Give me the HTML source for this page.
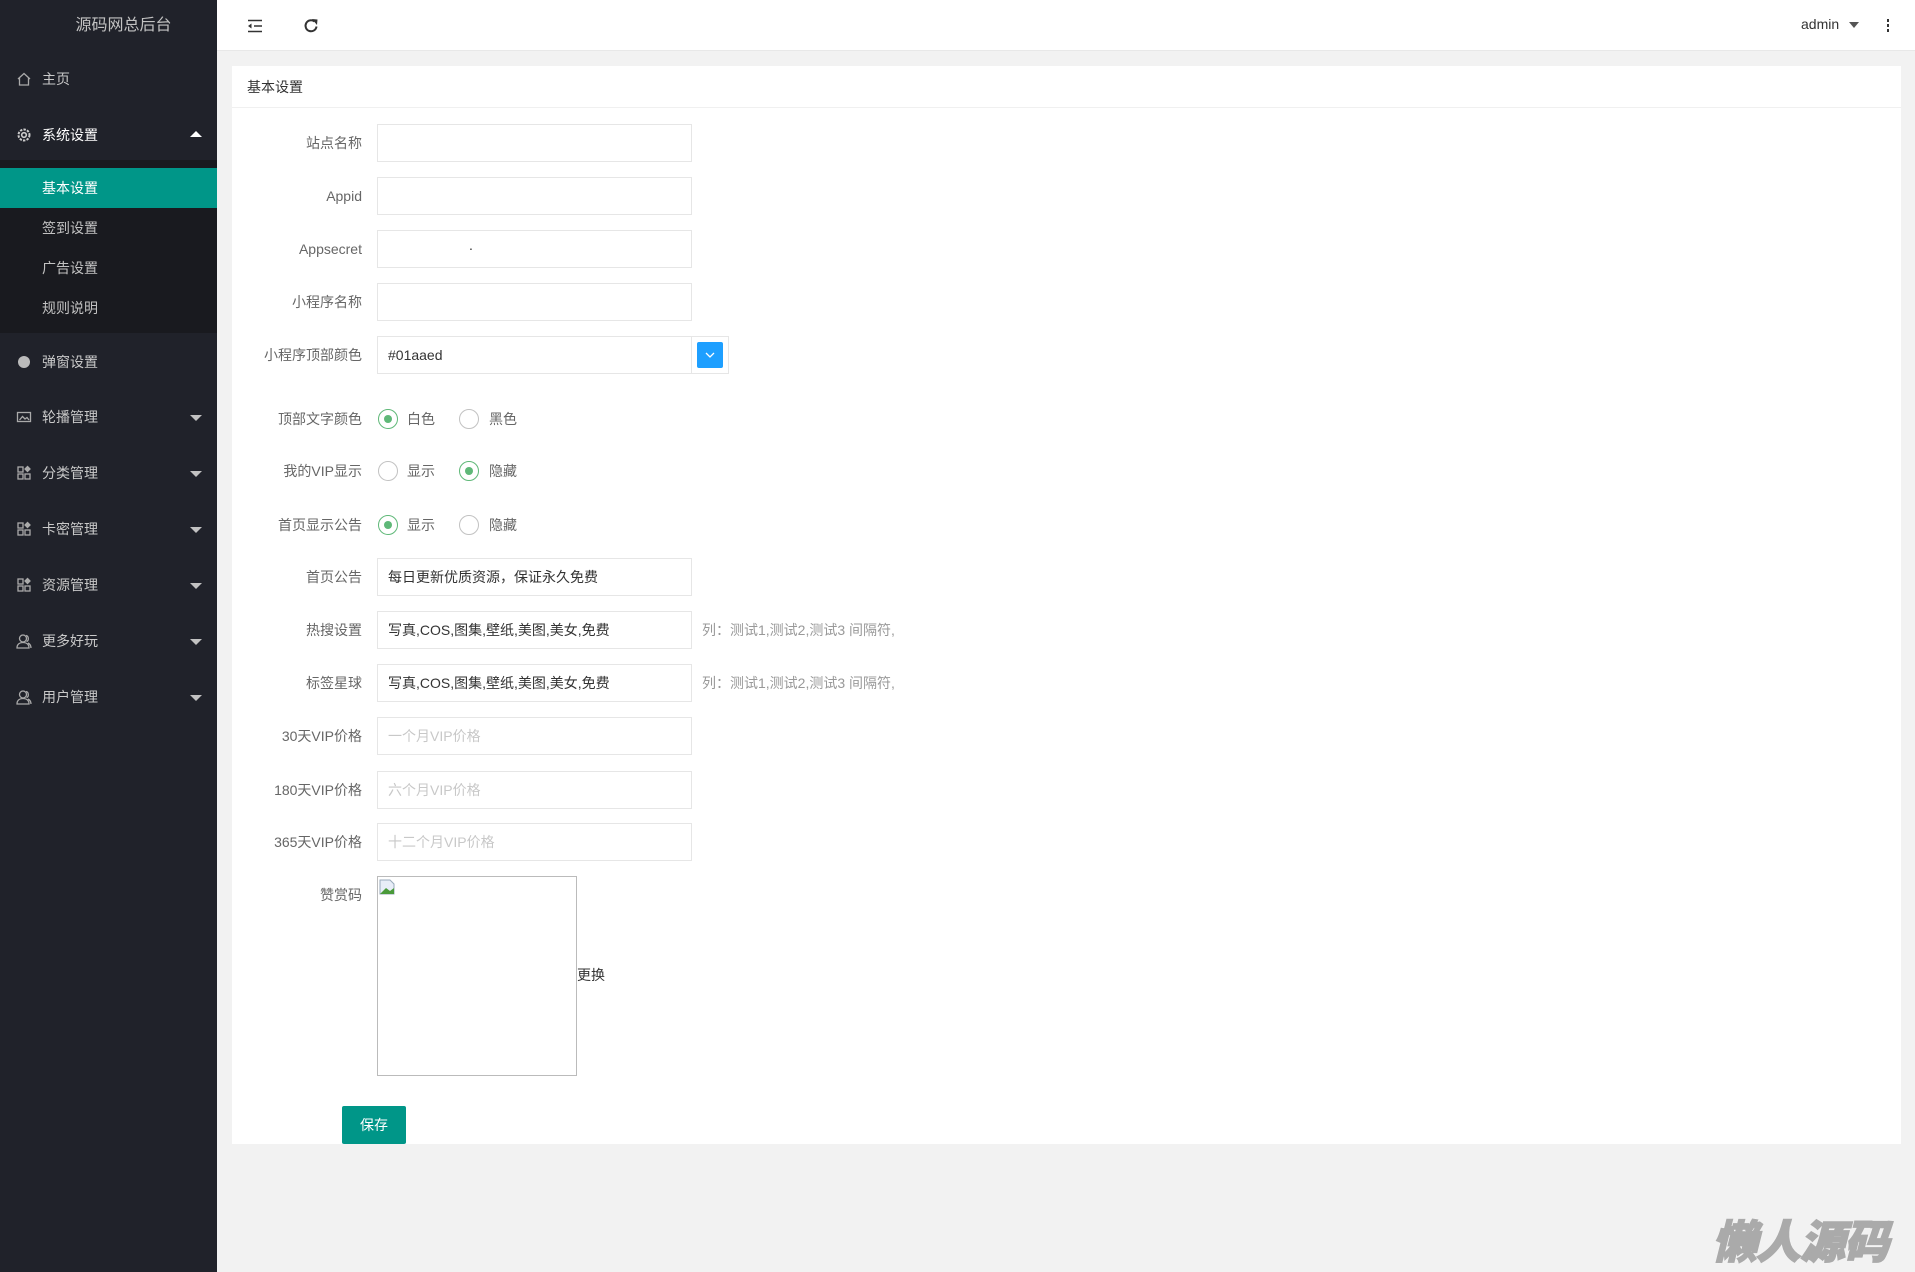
<!DOCTYPE html>
<html><head><meta charset="utf-8">
<style>
*{margin:0;padding:0;box-sizing:border-box}
body{width:1915px;height:1272px;background:#f2f2f2;font-family:"Liberation Sans","Noto Sans CJK SC",sans-serif;font-size:14px;color:#333;position:relative;overflow:hidden}
.abs{position:absolute}
.side{position:absolute;left:0;top:0;width:217px;height:1272px;background:#20222a}
.logo{position:absolute;left:0;top:0;width:217px;height:51px;line-height:51px;color:#c2c2c2;font-size:16px;text-align:center;padding-left:30px}
.mi{position:absolute;left:0;width:217px;height:40px;line-height:40px;color:#c9c9c9;font-size:14px;padding-left:42px}
.mi .ic{position:absolute;left:16px;top:12px;width:16px;height:16px}
.mi .ar{position:absolute;left:190px;top:18px;width:0;height:0;border-left:6px solid transparent;border-right:6px solid transparent;border-top:6px solid #c2c2c2}
.sub{position:absolute;left:0;top:160px;width:217px;height:173px;background:#191a1f}
.si{position:absolute;left:0;width:217px;height:40px;line-height:40px;padding-left:42px;color:#c2c2c2}
.top{position:absolute;left:217px;top:0;width:1698px;height:51px;background:#fff;border-bottom:1px solid #e8e8e8}
.card{position:absolute;left:232px;top:66px;width:1669px;height:1078px;background:#fff}
.ch{position:absolute;left:0;top:0;width:100%;height:42px;border-bottom:1px solid #f0f0f0;line-height:42px;padding-left:15px;color:#333}
.lab{position:absolute;right:1553px;width:160px;text-align:right;color:#666;font-size:14px;line-height:20px}
.inp{position:absolute;left:377px;width:315px;height:38px;border:1px solid #e6e6e6;background:#fff;line-height:36px;padding-left:10px;color:#333;font-size:14px}
.ph{color:#c8c8c8}
.help{position:absolute;left:702px;color:#999;line-height:20px}
.rad{position:absolute;width:20px;height:20px;border:1px solid #c2c2c2;border-radius:50%}
.rad.on{border-color:#5fb878}
.rad.on::after{content:"";position:absolute;left:5px;top:5px;width:8px;height:8px;border-radius:50%;background:#5fb878}
.rt{position:absolute;line-height:20px;color:#666}
</style></head><body>
<div class="side">
<div class="logo">源码网总后台</div>
<div class="mi" style="top:59px"><svg class="ic" viewBox="0 0 16 16" fill="none" stroke="#aaa" stroke-width="1.3"><path d="M2 8L8 2.5L14 8M3.5 6.8V14H12.5V6.8"/></svg>主页</div>
<div class="mi" style="top:115px;color:#fff"><svg class="ic" viewBox="0 0 16 16" fill="none" stroke="#ccc" stroke-width="1.6"><circle cx="8" cy="8" r="2.3"/><circle cx="8" cy="8" r="5.5" stroke-dasharray="2.4 1.2" stroke-width="2"/></svg>系统设置<span class="ar" style="border-top:0;border-bottom:6px solid #fff;top:16px"></span></div>
<div class="sub"></div>
<div class="si" style="top:168px;background:#009688;color:#fff">基本设置</div>
<div class="si" style="top:208px">签到设置</div>
<div class="si" style="top:248px">广告设置</div>
<div class="si" style="top:288px">规则说明</div>
<div class="mi" style="top:342px"><svg class="ic" viewBox="0 0 16 16"><circle cx="8" cy="8" r="6" fill="#bbb"/></svg>弹窗设置</div>
<div class="mi" style="top:397px"><svg class="ic" viewBox="0 0 16 16" fill="none" stroke="#aaa" stroke-width="1.3"><rect x="1.5" y="3.5" width="13" height="9"/><path d="M3.5 11L6.5 7.5L9 10L11 8.5L13 11"/></svg>轮播管理<span class="ar"></span></div>
<div class="mi" style="top:453px"><svg class="ic" viewBox="0 0 16 16" fill="none" stroke="#aaa" stroke-width="1.3"><rect x="2" y="2" width="5" height="5"/><rect x="2" y="9" width="5" height="5"/><rect x="9" y="9" width="5" height="5"/><path d="M11.5 1.5L14 4L11.5 6.5L9 4Z" fill="#aaa"/></svg>分类管理<span class="ar"></span></div>
<div class="mi" style="top:509px"><svg class="ic" viewBox="0 0 16 16" fill="none" stroke="#aaa" stroke-width="1.3"><rect x="2" y="2" width="5" height="5"/><rect x="2" y="9" width="5" height="5"/><rect x="9" y="9" width="5" height="5"/><path d="M11.5 1.5L14 4L11.5 6.5L9 4Z" fill="#aaa"/></svg>卡密管理<span class="ar"></span></div>
<div class="mi" style="top:565px"><svg class="ic" viewBox="0 0 16 16" fill="none" stroke="#aaa" stroke-width="1.3"><rect x="2" y="2" width="5" height="5"/><rect x="2" y="9" width="5" height="5"/><rect x="9" y="9" width="5" height="5"/><path d="M11.5 1.5L14 4L11.5 6.5L9 4Z" fill="#aaa"/></svg>资源管理<span class="ar"></span></div>
<div class="mi" style="top:621px"><svg class="ic" viewBox="0 0 16 16" fill="none" stroke="#aaa" stroke-width="1.3"><circle cx="7" cy="5.5" r="3.5"/><path d="M1 15C1 11 4 9.5 7 9.5S13 11 13 15ZM10 2.5C13 3 13 8 10.5 8.5M12 10C14 11 15 13 15 15"/></svg>更多好玩<span class="ar"></span></div>
<div class="mi" style="top:677px"><svg class="ic" viewBox="0 0 16 16" fill="none" stroke="#aaa" stroke-width="1.3"><circle cx="7" cy="5.5" r="3.5"/><path d="M1 15C1 11 4 9.5 7 9.5S13 11 13 15ZM10 2.5C13 3 13 8 10.5 8.5M12 10C14 11 15 13 15 15"/></svg>用户管理<span class="ar"></span></div>
</div>
<div class="top">
<svg class="abs" style="left:30px;top:19px" width="16" height="14" viewBox="0 0 16 14" fill="none" stroke="#333" stroke-width="1.5"><path d="M1 1.5H15M7 7H15M1 12.5H15"/><path d="M1 7L4.5 4.5V9.5Z" fill="#333" stroke="none"/></svg>
<svg class="abs" style="left:86px;top:18px" width="16" height="16" viewBox="0 0 16 16" fill="none" stroke="#333" stroke-width="2"><path d="M13.5 8.5A5.5 5.5 0 1 1 11.5 3.5"/><path d="M9 1L14.5 1.5L14 7Z" fill="#333" stroke="none"/></svg>
<div class="abs" style="left:1584px;top:16px;color:#333;font-size:14px">admin</div>
<div class="abs" style="left:1632px;top:22px;border-left:5px solid transparent;border-right:5px solid transparent;border-top:6px solid #555"></div>
<div class="abs" style="left:1670px;top:19px;width:2px;height:3px;background:#333;box-shadow:0 5px 0 #333,0 10px 0 #333"></div>
</div>
<div class="card"><div class="ch">基本设置</div></div>

<div class="lab" style="top:133px">站点名称</div><div class="inp" style="top:124px"></div>
<div class="lab" style="top:186px">Appid</div><div class="inp" style="top:177px"></div>
<div class="lab" style="top:239px">Appsecret</div><div class="inp" style="top:230px"><span style="position:absolute;left:91px;top:-4px">.</span></div>
<div class="lab" style="top:292px">小程序名称</div><div class="inp" style="top:283px"></div>
<div class="lab" style="top:345px">小程序顶部颜色</div><div class="inp" style="top:336px;width:316px">#01aaed</div>
<div class="abs" style="left:691px;top:336px;width:38px;height:38px;border:1px solid #e6e6e6;background:#fff"><div style="position:absolute;left:5px;top:5px;width:26px;height:26px;background:#1e9fff;border-radius:2px"><svg width="26" height="26" viewBox="0 0 26 26" fill="none" stroke="#fff" stroke-width="1.3"><path d="M9 11L13 15L17 11"/></svg></div></div>

<div class="lab" style="top:409px">顶部文字颜色</div>
<div class="rad on" style="left:378px;top:409px"></div><div class="rt" style="left:407px;top:409px">白色</div>
<div class="rad" style="left:459px;top:409px"></div><div class="rt" style="left:489px;top:409px">黑色</div>
<div class="lab" style="top:461px">我的VIP显示</div>
<div class="rad" style="left:378px;top:461px"></div><div class="rt" style="left:407px;top:461px">显示</div>
<div class="rad on" style="left:459px;top:461px"></div><div class="rt" style="left:489px;top:461px">隐藏</div>
<div class="lab" style="top:515px">首页显示公告</div>
<div class="rad on" style="left:378px;top:515px"></div><div class="rt" style="left:407px;top:515px">显示</div>
<div class="rad" style="left:459px;top:515px"></div><div class="rt" style="left:489px;top:515px">隐藏</div>

<div class="lab" style="top:567px">首页公告</div><div class="inp" style="top:558px">每日更新优质资源，保证永久免费</div>
<div class="lab" style="top:620px">热搜设置</div><div class="inp" style="top:611px">写真,COS,图集,壁纸,美图,美女,免费</div><div class="help" style="top:620px">列：测试1,测试2,测试3 间隔符,</div>
<div class="lab" style="top:673px">标签星球</div><div class="inp" style="top:664px">写真,COS,图集,壁纸,美图,美女,免费</div><div class="help" style="top:673px">列：测试1,测试2,测试3 间隔符,</div>
<div class="lab" style="top:726px">30天VIP价格</div><div class="inp ph" style="top:717px">一个月VIP价格</div>
<div class="lab" style="top:780px">180天VIP价格</div><div class="inp ph" style="top:771px">六个月VIP价格</div>
<div class="lab" style="top:832px">365天VIP价格</div><div class="inp ph" style="top:823px">十二个月VIP价格</div>
<div class="lab" style="top:885px">赞赏码</div>
<div class="abs" style="left:377px;top:876px;width:200px;height:200px;border:1px solid #bbb;background:#fff"><svg style="position:absolute;left:1px;top:2px" width="16" height="16" viewBox="0 0 16 16"><path d="M1 1H11L15 5V15H1Z" fill="#e8eef8" stroke="#9ab"/><path d="M1 15L7 9L11 12L15 9V15Z" fill="#4a9a3a"/></svg></div>
<div class="abs" style="left:577px;top:965px;color:#333">更换</div>
<div class="abs" style="left:342px;top:1106px;width:64px;height:38px;background:#009688;color:#fff;text-align:center;line-height:38px;border-radius:2px">保存</div>
<div class="abs" style="left:1712px;top:1206px;font-size:45px;font-weight:900;font-style:italic;color:#aaa;letter-spacing:-1px;-webkit-text-stroke:1.5px #aaa;text-shadow:0 0 2px #fff">懒人源码</div>
</body></html>
